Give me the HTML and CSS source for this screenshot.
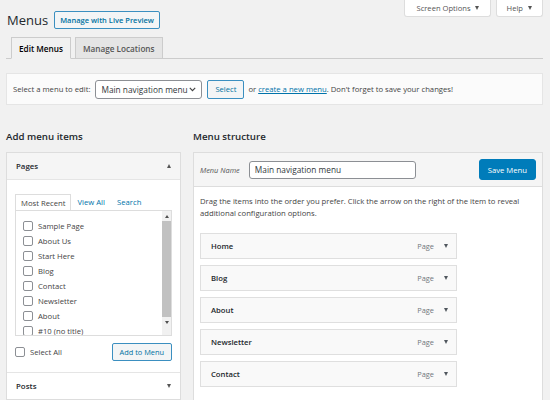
FILE: index.html
```html
<!DOCTYPE html>
<html lang="en">
<head>
    <meta charset="UTF-8">
    <title>Menus</title>
    <link rel="stylesheet" href="styles.css">
</head>
<body>
<div class="wrap">
    <div class="top">
        <div class="title-row">
            <h1>Menus</h1>
            <a class="btn-outline live-preview" href="#">Manage with Live Preview</a>
        </div>
        <div class="meta-links">
            <button class="meta-tab screen-options">Screen Options <span class="caret"></span></button>
            <button class="meta-tab help">Help <span class="caret"></span></button>
        </div>
    </div>

    <nav class="nav-tabs">
        <a class="nav-tab active" href="#">Edit Menus</a>
        <a class="nav-tab" href="#">Manage Locations</a>
    </nav>

    <div class="manage-menus">
        <label class="select-label">Select a menu to edit:</label>
        <div class="select">
            <span>Main navigation menu</span>
            <svg width="7" height="5" viewBox="0 0 7 5"><path d="M0.8 0.8 L3.5 3.6 L6.2 0.8" fill="none" stroke="#444" stroke-width="1.2"/></svg>
        </div>
        <button class="btn-outline select-btn">Select</button>
        <span class="hint">or <a href="#">create a new menu</a>. Don't forget to save your changes!</span>
    </div>

    <div class="columns">
        <div class="col-left">
            <h2>Add menu items</h2>
            <div class="accordion">
                <div class="acc-head open">
                    <span>Pages</span>
                    <span class="caret up"></span>
                </div>
                <div class="acc-body">
                    <div class="tabs">
                        <span class="tab active">Most Recent</span>
                        <a class="tab" href="#">View All</a>
                        <a class="tab" href="#">Search</a>
                    </div>
                    <div class="list">
                        <ul class="checklist">
                            <li><input type="checkbox"> Sample Page</li>
                            <li><input type="checkbox"> About Us</li>
                            <li><input type="checkbox"> Start Here</li>
                            <li><input type="checkbox"> Blog</li>
                            <li><input type="checkbox"> Contact</li>
                            <li><input type="checkbox"> Newsletter</li>
                            <li><input type="checkbox"> About</li>
                            <li><input type="checkbox"> #10 (no title)</li>
                        </ul>
                        <div class="scrollbar">
                            <span class="sb-arrow"><span class="caret tiny up"></span></span>
                            <span class="sb-thumb"></span>
                            <span class="sb-arrow"><span class="caret tiny"></span></span>
                        </div>
                    </div>
                    <div class="acc-actions">
                        <label class="select-all"><input type="checkbox"> Select All</label>
                        <button class="btn-outline add-btn">Add to Menu</button>
                    </div>
                </div>
                <div class="acc-head">
                    <span>Posts</span>
                    <span class="caret"></span>
                </div>
            </div>
        </div>

        <div class="col-right">
            <h2>Menu structure</h2>
            <div class="menu-panel">
                <div class="menu-head">
                    <label class="name-label">Menu Name</label>
                    <input class="name-input" type="text" value="Main navigation menu">
                    <button class="btn-primary">Save Menu</button>
                </div>
                <div class="menu-body">
                    <p class="drag-hint">Drag the items into the order you prefer. Click the arrow on the right of the item to reveal additional configuration options.</p>
                    <ul class="menu-items">
                        <li class="menu-item"><span class="item-title">Home</span><span class="item-type">Page</span><span class="caret dark"></span></li>
                        <li class="menu-item"><span class="item-title">Blog</span><span class="item-type">Page</span><span class="caret dark"></span></li>
                        <li class="menu-item"><span class="item-title">About</span><span class="item-type">Page</span><span class="caret dark"></span></li>
                        <li class="menu-item"><span class="item-title">Newsletter</span><span class="item-type">Page</span><span class="caret dark"></span></li>
                        <li class="menu-item"><span class="item-title">Contact</span><span class="item-type">Page</span><span class="caret dark"></span></li>
                    </ul>
                </div>
            </div>
        </div>
    </div>
</div>
</body>
</html>
```

FILE: styles.css
```css
body {
    margin: 0;
    background: #f1f1f1;
    font-family: "Open Sans", sans-serif;
    font-size: 7.7px;
    color: #444;
    overflow: hidden;
}
.wrap {
    padding: 0 7px 0 6px;
}
a {
    color: #0073aa;
}
button {
    font-family: inherit;
    cursor: pointer;
}

/* header */
.top {
    display: flex;
    justify-content: space-between;
    align-items: flex-start;
}
.title-row {
    display: flex;
    align-items: center;
    gap: 6px;
    margin-top: 11px;
    padding-left: 1px;
}
h1 {
    margin: 0;
    font-size: 13px;
    font-weight: 400;
    line-height: 18px;
    color: #23282d;
}
.btn-outline {
    display: inline-flex;
    align-items: center;
    box-sizing: border-box;
    height: 18px;
    padding: 0 6px;
    border: 1px solid #0071a1;
    border-radius: 2px;
    background: #f3f5f6;
    color: #0071a1;
    font-size: 7.6px;
    text-decoration: none;
}
.live-preview {
    font-weight: 600;
    font-size: 7.5px;
    padding: 0 5px;
    border-color: #3b8fc0;
}
.meta-links {
    display: flex;
    gap: 5px;
}
.meta-tab {
    display: flex;
    align-items: center;
    gap: 4px;
    height: 17px;
    padding: 0 11px;
    background: #fff;
    border: 1px solid #ddd;
    border-top: none;
    border-radius: 0 0 3px 3px;
    color: #555;
    font-size: 7.6px;
}
.meta-tab.help {
    padding: 0 10px;
    gap: 5px;
}
.caret {
    display: inline-block;
    width: 0;
    height: 0;
    border-left: 2.5px solid transparent;
    border-right: 2.5px solid transparent;
    border-top: 4px solid #555;
}
.caret.up {
    border-top: none;
    border-bottom: 4px solid #555;
}
.caret.tiny {
    border-left-width: 2px;
    border-right-width: 2px;
    border-top-width: 3px;
    border-top-color: #505050;
}
.caret.tiny.up {
    border-bottom: 3px solid #505050;
}
.caret.dark {
    border-top-color: #50575e;
}

/* tabs */
.nav-tabs {
    display: flex;
    gap: 4px;
    margin-top: 8px;
    padding-left: 5px;
    border-bottom: 1px solid #ccc;
}
.nav-tab {
    display: flex;
    align-items: center;
    height: 20px;
    padding: 0 7px;
    margin-bottom: -1px;
    border: 1px solid #ccc;
    border-bottom: none;
    background: #e5e5e5;
    color: #555;
    font-size: 8.2px;
    font-weight: 600;
    text-decoration: none;
}
.nav-tab.active {
    background: #f1f1f1;
    color: #000;
    border-bottom: 1px solid #f1f1f1;
}

/* select menu box */
.manage-menus {
    display: flex;
    align-items: center;
    box-sizing: border-box;
    height: 32px;
    margin-top: 14px;
    padding: 0 6px;
    background: #fbfbfb;
    border: 1px solid #e5e5e5;
}
.select {
    display: flex;
    align-items: center;
    justify-content: space-between;
    box-sizing: border-box;
    width: 107px;
    height: 19px;
    margin-left: 5px;
    padding: 0 5px;
    background: #fff;
    border: 1px solid #8c8f94;
    border-radius: 3px;
    color: #32373c;
    font-size: 8.3px;
}
.select-btn {
    height: 19px;
    margin-left: 5px;
    padding: 0 7px;
    border-color: #3b8fc0;
}
.hint {
    margin-left: 4px;
}

/* columns */
.columns {
    display: flex;
    gap: 12px;
    margin-top: 25px;
}
h2 {
    margin: 0 0 9px;
    font-size: 9.7px;
    font-weight: 600;
    line-height: 13px;
    color: #23282d;
}
.col-left {
    width: 175px;
    flex-shrink: 0;
}
.col-right {
    flex: 1;
}
.accordion {
    border: 1px solid #ddd;
    background: #fff;
}
.acc-head {
    display: flex;
    justify-content: space-between;
    align-items: center;
    height: 26px;
    padding: 0 9px;
    color: #23282d;
    font-size: 7.9px;
    font-weight: 600;
}
.acc-head.open {
    background: #f5f5f5;
    border-bottom: 1px solid #e5e5e5;
}
.acc-body {
    padding: 14px 8px 11px;
    border-bottom: 1px solid #e5e5e5;
}
.tabs {
    display: flex;
    align-items: flex-end;
}
.tab {
    display: flex;
    align-items: center;
    height: 16px;
    padding: 0 6px;
    text-decoration: none;
}
.tab.active {
    box-sizing: border-box;
    padding: 0 5px;
    border: 1px solid #ddd;
    border-bottom: none;
    color: #444;
}
.list {
    display: flex;
    box-sizing: border-box;
    height: 126px;
    border: 1px solid #ddd;
    overflow: hidden;
}
.checklist {
    flex: 1;
    margin: 0;
    padding: 7px 0 0 7px;
    list-style: none;
}
.checklist li {
    display: flex;
    align-items: center;
    gap: 5px;
    height: 15px;
}
input[type="checkbox"] {
    appearance: none;
    -webkit-appearance: none;
    width: 10px;
    height: 10px;
    margin: 0;
    border: 1px solid #8c8f94;
    border-radius: 2px;
    background: #fff;
}
.scrollbar {
    display: flex;
    flex-direction: column;
    width: 9px;
    background: #f1f1f1;
}
.sb-arrow {
    display: flex;
    align-items: center;
    justify-content: center;
    height: 10px;
}
.sb-thumb {
    height: 96px;
    background: #c1c1c1;
}
.acc-actions {
    display: flex;
    justify-content: space-between;
    align-items: center;
    margin-top: 7px;
}
.select-all {
    display: flex;
    align-items: center;
    gap: 5px;
}
.add-btn {
    padding: 0 7px;
    font-size: 7.4px;
    border-color: #3b8fc0;
}

/* menu structure */
.menu-panel {
    border: 1px solid #ddd;
    background: #fff;
}
.menu-head {
    display: flex;
    align-items: center;
    height: 33px;
    padding: 0 6px;
    background: #f5f5f5;
    border-bottom: 1px solid #ddd;
}
.name-label {
    font-style: italic;
    color: #555;
    font-size: 7.4px;
}
.name-input {
    box-sizing: border-box;
    width: 167px;
    height: 18px;
    margin-left: 9px;
    padding: 0 5px;
    border: 1px solid #8c8f94;
    border-radius: 3px;
    font-family: inherit;
    font-size: 8.3px;
    color: #32373c;
}
.btn-primary {
    height: 21px;
    margin-left: auto;
    padding: 0 8px;
    background: #007cba;
    border: 1px solid #007cba;
    border-radius: 3px;
    color: #fff;
    font-size: 7.7px;
}
.menu-body {
    padding: 8px 6px 20px;
}
.drag-hint {
    margin: 0;
    line-height: 12px;
}
.menu-items {
    width: 257px;
    margin: 14px 0 0;
    padding: 0;
    list-style: none;
}
.menu-item {
    display: flex;
    align-items: center;
    box-sizing: border-box;
    height: 26px;
    margin-bottom: 6px;
    padding: 0 8px 0 10px;
    background: #f9f9f9;
    border: 1px solid #dfdfdf;
}
.item-title {
    flex: 1;
    font-weight: 600;
    color: #23282d;
}
.item-type {
    margin-right: 10px;
    color: #72777c;
    font-size: 7.4px;
}
```
